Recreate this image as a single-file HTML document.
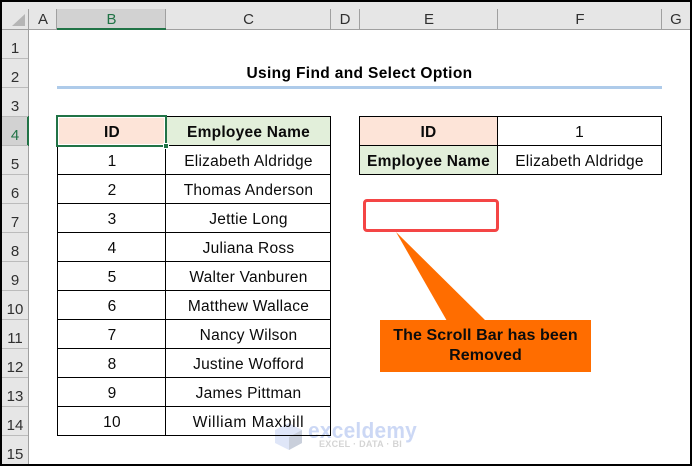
<!DOCTYPE html>
<html><head><meta charset="utf-8"><style>
html,body{margin:0;padding:0;background:#fff}
#p{position:relative;width:692px;height:466px;overflow:hidden;background:#fff;font-family:"Liberation Sans",sans-serif;font-size:15.5px;letter-spacing:.25px;color:#0a0a0a}
#p div{position:absolute;box-sizing:border-box}
.bk{background:#000}
.ch,.rh{text-align:center;color:#303030;font-size:15px;letter-spacing:0}
.ch{top:10px;height:20px;line-height:20px}
.rh{left:2px;width:26px;height:29px;line-height:40px}
.t{text-align:center;height:29px;line-height:31px;white-space:nowrap}
.b{font-weight:bold}
.hl{background:#a0a0a0}
.rl{left:2px;width:26px;height:1px;background:#bbb}
</style></head><body><div id="p">
<div style="left:2px;top:2px;width:688px;height:27px;background:#e6e6e6"></div>
<div style="left:2px;top:29px;width:27px;height:435px;background:#e6e6e6"></div>
<div style="left:57px;top:9px;width:109px;height:20px;background:#d2d2d2"></div>
<div style="left:2px;top:116px;width:27px;height:30px;background:#d2d2d2"></div>
<svg style="position:absolute;left:12px;top:14px" width="14" height="13"><polygon points="13,0 13,12 0,12" fill="#b5b5b5"/></svg>
<div class="hl" style="left:2px;top:29px;width:688px;height:1px"></div>
<div class="hl" style="left:28px;top:9px;width:1px;height:455px"></div>
<div class="hl" style="left:56px;top:9px;width:1px;height:20px"></div>
<div class="hl" style="left:165px;top:9px;width:1px;height:20px"></div>
<div class="hl" style="left:330px;top:9px;width:1px;height:20px"></div>
<div class="hl" style="left:359px;top:9px;width:1px;height:20px"></div>
<div class="hl" style="left:497px;top:9px;width:1px;height:20px"></div>
<div class="hl" style="left:661px;top:9px;width:1px;height:20px"></div>
<div style="left:57px;top:28px;width:109px;height:2px;background:#217346"></div>
<div style="left:27px;top:116px;width:2px;height:30px;background:#217346"></div>
<div class="rl" style="top:58px"></div>
<div class="rl" style="top:87px"></div>
<div class="rl" style="top:116px"></div>
<div class="rl" style="top:145px"></div>
<div class="rl" style="top:174px"></div>
<div class="rl" style="top:203px"></div>
<div class="rl" style="top:232px"></div>
<div class="rl" style="top:261px"></div>
<div class="rl" style="top:290px"></div>
<div class="rl" style="top:319px"></div>
<div class="rl" style="top:348px"></div>
<div class="rl" style="top:377px"></div>
<div class="rl" style="top:406px"></div>
<div class="rl" style="top:435px"></div>
<div class="ch" style="left:29px;width:28px">A</div>
<div class="ch" style="left:57px;width:109px;color:#217346">B</div>
<div class="ch" style="left:166px;width:165px">C</div>
<div class="ch" style="left:331px;width:28px">D</div>
<div class="ch" style="left:360px;width:138px">E</div>
<div class="ch" style="left:498px;width:164px">F</div>
<div class="ch" style="left:662px;width:28px">G</div>
<div class="rh" style="top:29px">1</div>
<div class="rh" style="top:58px">2</div>
<div class="rh" style="top:87px">3</div>
<div class="rh" style="top:116px;color:#217346">4</div>
<div class="rh" style="top:145px">5</div>
<div class="rh" style="top:174px">6</div>
<div class="rh" style="top:203px">7</div>
<div class="rh" style="top:232px">8</div>
<div class="rh" style="top:261px">9</div>
<div class="rh" style="top:290px">10</div>
<div class="rh" style="top:319px">11</div>
<div class="rh" style="top:348px">12</div>
<div class="rh" style="top:377px">13</div>
<div class="rh" style="top:406px">14</div>
<div class="rh" style="top:435px">15</div>
<div class="t b" style="left:57px;top:58px;width:605px;letter-spacing:.35px;color:#000">Using Find and Select Option</div>
<div style="left:57px;top:86px;width:605px;height:3px;background:#aecbea"></div>
<div style="left:58px;top:117px;width:108px;height:28px;background:#fde4d8"></div>
<div style="left:166px;top:117px;width:165px;height:28px;background:#e2efda"></div>
<div style="left:360px;top:117px;width:137px;height:28px;background:#fde4d8"></div>
<div style="left:360px;top:146px;width:137px;height:28px;background:#e2efda"></div>
<div class="bk" style="left:57px;top:116px;width:274px;height:1px"></div>
<div class="bk" style="left:57px;top:145px;width:274px;height:1px"></div>
<div class="bk" style="left:57px;top:174px;width:274px;height:1px"></div>
<div class="bk" style="left:57px;top:203px;width:274px;height:1px"></div>
<div class="bk" style="left:57px;top:232px;width:274px;height:1px"></div>
<div class="bk" style="left:57px;top:261px;width:274px;height:1px"></div>
<div class="bk" style="left:57px;top:290px;width:274px;height:1px"></div>
<div class="bk" style="left:57px;top:319px;width:274px;height:1px"></div>
<div class="bk" style="left:57px;top:348px;width:274px;height:1px"></div>
<div class="bk" style="left:57px;top:377px;width:274px;height:1px"></div>
<div class="bk" style="left:57px;top:406px;width:274px;height:1px"></div>
<div class="bk" style="left:57px;top:435px;width:274px;height:1px"></div>
<div class="bk" style="left:57px;top:116px;width:1px;height:320px"></div>
<div class="bk" style="left:165px;top:116px;width:1px;height:320px"></div>
<div class="bk" style="left:330px;top:116px;width:1px;height:320px"></div>
<div class="bk" style="left:359px;top:116px;width:303px;height:1px"></div>
<div class="bk" style="left:359px;top:145px;width:303px;height:1px"></div>
<div class="bk" style="left:359px;top:174px;width:303px;height:1px"></div>
<div class="bk" style="left:359px;top:116px;width:1px;height:59px"></div>
<div class="bk" style="left:497px;top:116px;width:1px;height:59px"></div>
<div class="bk" style="left:661px;top:116px;width:1px;height:59px"></div>
<div style="left:56px;top:115px;width:111px;height:32px;border:2px solid #217346"></div>
<div style="left:58px;top:117px;width:107px;height:28px;border:1px solid #fff"></div>
<div style="left:163px;top:143px;width:6px;height:6px;background:#217346;border:1px solid #fff"></div>
<div class="t b" style="left:58px;top:117px;width:108px">ID</div>
<div class="t b" style="left:166px;top:117px;width:165px">Employee Name</div>
<div class="t" style="left:58px;top:146px;width:108px">1</div><div class="t" style="left:166px;top:146px;width:165px">Elizabeth Aldridge</div>
<div class="t" style="left:58px;top:175px;width:108px">2</div><div class="t" style="left:166px;top:175px;width:165px">Thomas Anderson</div>
<div class="t" style="left:58px;top:204px;width:108px">3</div><div class="t" style="left:166px;top:204px;width:165px">Jettie Long</div>
<div class="t" style="left:58px;top:233px;width:108px">4</div><div class="t" style="left:166px;top:233px;width:165px">Juliana Ross</div>
<div class="t" style="left:58px;top:262px;width:108px">5</div><div class="t" style="left:166px;top:262px;width:165px">Walter Vanburen</div>
<div class="t" style="left:58px;top:291px;width:108px">6</div><div class="t" style="left:166px;top:291px;width:165px">Matthew Wallace</div>
<div class="t" style="left:58px;top:320px;width:108px">7</div><div class="t" style="left:166px;top:320px;width:165px">Nancy Wilson</div>
<div class="t" style="left:58px;top:349px;width:108px">8</div><div class="t" style="left:166px;top:349px;width:165px">Justine Wofford</div>
<div class="t" style="left:58px;top:378px;width:108px">9</div><div class="t" style="left:166px;top:378px;width:165px">James Pittman</div>
<div class="t" style="left:58px;top:407px;width:108px">10</div><div class="t" style="left:166px;top:407px;width:165px;letter-spacing:.6px">William Maxbill</div>
<div class="t b" style="left:360px;top:117px;width:137px">ID</div>
<div class="t" style="left:498px;top:117px;width:163px">1</div>
<div class="t b" style="left:360px;top:146px;width:137px">Employee Name</div>
<div class="t" style="left:498px;top:146px;width:163px">Elizabeth Aldridge</div>
<div style="left:363px;top:199px;width:136px;height:33px;border:3px solid #f44545;border-radius:4px"></div>
<svg style="position:absolute;left:380px;top:230px" width="212" height="143"><polygon points="16,2 106,91 67,91" fill="#ff6d00"/><rect x="0" y="90" width="211" height="52" fill="#ff6d00"/></svg>
<div class="b" style="left:380px;top:320px;width:211px;text-align:center;font-size:16px;letter-spacing:.1px;line-height:20px;color:#0c0c0c;padding-top:6px">The Scroll Bar has been<br>Removed</div>
<svg style="position:absolute;left:275px;top:421px;mix-blend-mode:multiply" width="145" height="32"><polygon points="0,9 14,2 27,9 27,22 14,29 0,22" fill="#dfe6f8"/><polygon points="14,16 27,9 27,22 14,29" fill="#c9cfdb"/><text x="33" y="17" font-family="'Liberation Sans',sans-serif" font-weight="bold" font-size="22" textLength="109" lengthAdjust="spacingAndGlyphs" fill="#ccd8f5">exceldemy</text><text x="44" y="26" font-family="'Liberation Sans',sans-serif" font-weight="bold" font-size="9" textLength="83" fill="#d4d4d4">EXCEL · DATA · BI</text></svg>
<div class="bk" style="left:0;top:0;width:692px;height:2px"></div>
<div class="bk" style="left:0;top:464px;width:692px;height:2px"></div>
<div class="bk" style="left:0;top:0;width:2px;height:466px"></div>
<div class="bk" style="left:690px;top:0;width:2px;height:466px"></div>
</div></body></html>
